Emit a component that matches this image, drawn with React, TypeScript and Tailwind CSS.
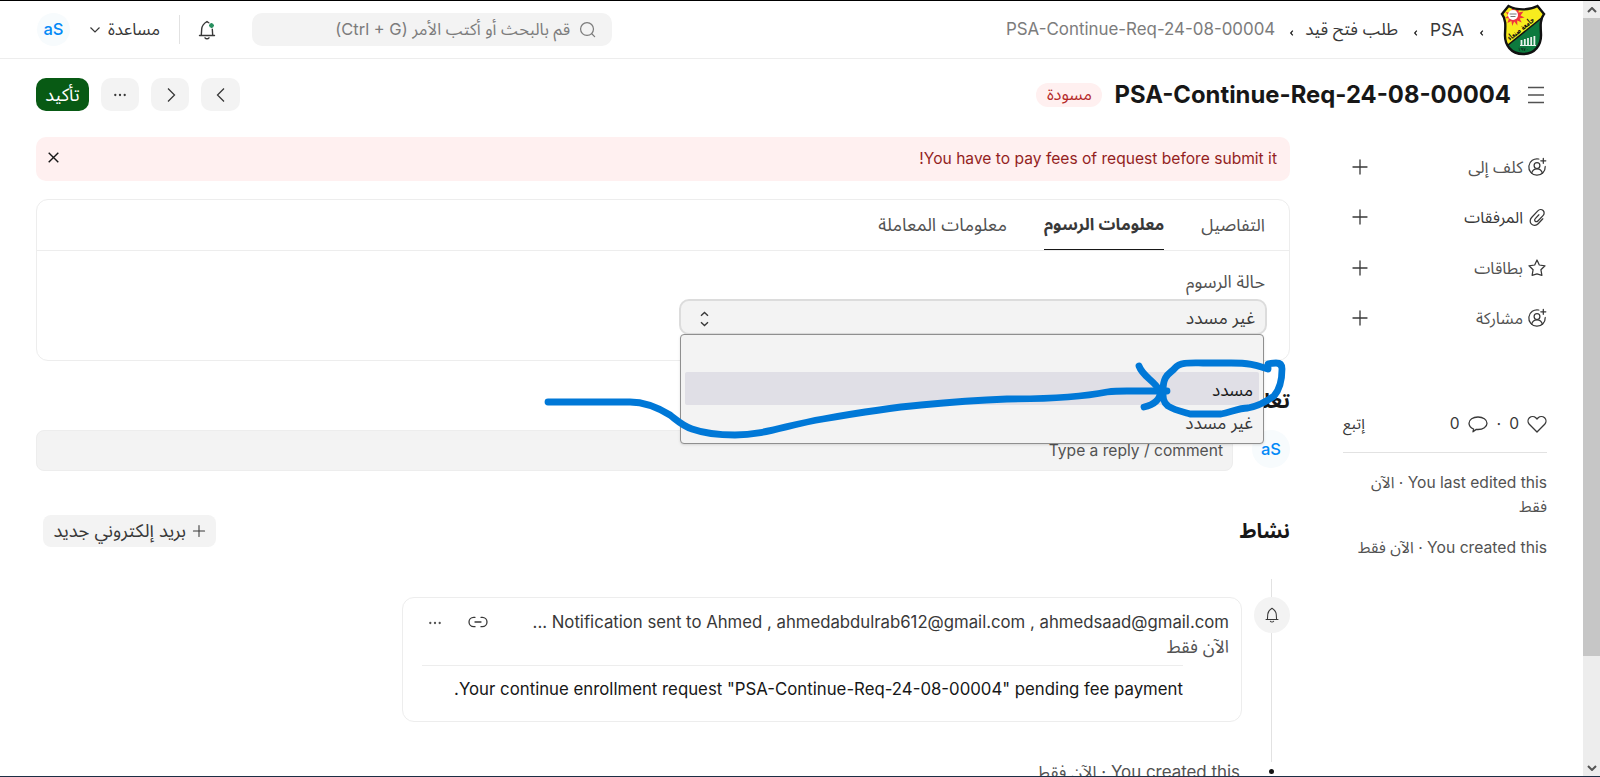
import type { ReactNode } from "react";

function Svg({ s = 20, w = 1.2, className = "", children }: { s?: number; w?: number; className?: string; children: ReactNode }) {
  return (
    <svg width={s} height={s} viewBox="0 0 20 20" fill="none" stroke="currentColor" strokeWidth={w} strokeLinecap="round" strokeLinejoin="round" className={"shrink-0 " + className}>
      {children}
    </svg>
  );
}

const AssignIcon = () => (
  <Svg w={1.25}>
    <path d="M11.800 2A8.200 8.200 0 1 0 18.200 9.500" />
    <circle cx="10" cy="8.600" r="2.900" />
    <path d="M4.600 16.200c.7-2.600 2.800-4.300 5.400-4.300s4.700 1.700 5.400 4.300M16.300 1.300v5M13.800 3.800h5" />
  </Svg>
);
const ClipIcon = () => (
  <Svg w={1.25}>
    <path d="M15.800 11.800l-4.600 4.900c-1.900 2-4.900 2.100-6.700.4s-1.800-4.600.1-6.600l6.200-6.600c1.500-1.600 3.900-1.700 5.300-.4s1.400 3.500-.1 5.100l-5.100 5.400c-.8.9-2 .9-2.700.2s-.7-1.800.1-2.600l3.600-3.800" />
  </Svg>
);
const StarIcon = () => (
  <Svg w={1.25}>
    <path d="M10 2l2.300 5 5.700.8-4.100 3.900 1 5.600-4.900-1.400-4.900 1.400 1-5.600L2 7.800 7.700 7z" />
  </Svg>
);
const PlusIcon = ({ s = 20 }: { s?: number }) => (
  <Svg s={s} w={1.3}><path d="M10 3v14M3 10h14" /></Svg>
);
const Dots = () => (
  <svg width="16" height="16" viewBox="0 0 16 16" fill="currentColor" className="shrink-0">
    <circle cx="3.300" cy="8" r="1.150" /><circle cx="8" cy="8" r="1.150" /><circle cx="12.700" cy="8" r="1.150" />
  </svg>
);
const BellShape = () => (
  <path d="M2.500 15.500h15M4.300 15.300l.4-6.300C4.900 5.500 6.900 3.500 10 1.500c3.100 2 5.100 4 5.300 7.500l.4 6.300M8 17.800c.5.700 1.200 1 2 1s1.500-.3 2-1" />
);

const SHIELD = "M8.500 2C17 6.500 29 6.500 37.500 2L44 10c-4 5-3.500 12-3 20 .5 11-6 20-18 20S4.500 41 5 30C5.500 22 6 15 2 10z";

function Crest() {
  return (
    <svg width="46" height="52" viewBox="0 0 46 52" className="shrink-0">
      <defs>
        <clipPath id="shield"><path d={SHIELD} /></clipPath>
      </defs>
      <g clipPath="url(#shield)">
        <rect width="46" height="52" fill="#0d7a3e" />
        <path d="M0 0H46V11L0 47z" fill="#f7ec1e" />
        <path d="M13 3l2 4 4-3-.5 4.500 5-1-3 4 4 2-4.800 1 2 4-4.500-2 .2 5-3.200-4-2 4.500-.8-5-4 2 1.600-4.500-4-.5 3.500-2.500-3-3.500 4.500.8z" fill="#f0353f" />
        <circle cx="13" cy="11" r="5" fill="#fff" />
        <path d="M9.500 10h7M10.500 12.500h5" stroke="#777" strokeWidth="1" />
        <path d="M3 45L44 12" stroke="#111" strokeWidth="1.500" />
        <path d="M21.500 36v5M24.800 35v6M28 34v7M31.200 33v8M34.400 32v9" stroke="#e9f3ec" strokeWidth="1.800" />
        <path d="M20 41.500h16" stroke="#e9f3ec" strokeWidth="1" />
      </g>
      <path d={SHIELD} fill="none" stroke="#111" strokeWidth="2.400" />
      <text transform="translate(10 37) rotate(-39)" fontSize="8.500" fontWeight="bold" direction="ltr" textLength="32" lengthAdjust="spacingAndGlyphs" className="font-['DejaVu_Sans']" fill="#111">جامعة صنعاء</text>
      <text x="18" y="47" fontSize="5" direction="ltr" fill="#111" className="font-['DejaVu_Sans']">١٩٧٠</text>
    </svg>
  );
}

const Sep = () => (
  <span className="mt-[7px] flex w-[9px] justify-center text-[#171717]">
    <svg width="5" height="8" viewBox="0 0 5 8" fill="none" stroke="currentColor" strokeWidth="1.200"><path d="M3.800 1.700L1.700 4l2.100 2.300" /></svg>
  </span>
);

function SideRow({ icon, label, size }: { icon: ReactNode; label: string; size: string }) {
  return (
    <div className="flex h-[50.300px] items-center text-[#383838]">
      {icon}
      <span className={"mr-[4px] " + size}>{label}</span>
      <span className="mr-auto ml-[7px] flex"><PlusIcon /></span>
    </div>
  );
}

export default function App() {
  return (
    <div dir="rtl" className="relative flex h-[777px] w-[1600px] overflow-hidden border-y border-t-black border-b-[#1d2f45] bg-white font-['Inter','Noto_Sans_Arabic','Noto_Sans',sans-serif] text-[16.250px] text-[#383838]">
      <div className="flex w-[17px] shrink-0 flex-col bg-[#ededed] text-[#555]">
        <div className="flex h-[17px] items-center justify-center"><svg width="10" height="6" viewBox="0 0 10 6" fill="none" stroke="currentColor" strokeWidth="2"><path d="M1 5l4-4 4 4" /></svg></div>
        <div className="h-[638px] bg-[#c6c6c6]" />
        <div className="mt-auto flex h-[17px] items-center justify-center"><svg width="10" height="6" viewBox="0 0 10 6" fill="none" stroke="currentColor" strokeWidth="2"><path d="M1 1l4 4 4-4" /></svg></div>
      </div>

      <div className="flex min-w-0 flex-1 flex-col">
        <nav className="flex h-[58px] shrink-0 items-center border-b border-[#ededed] pr-[37px] pl-[36px]">
          <Crest />
          <div className="mr-[14px] flex items-center text-[17.300px]">
            <Sep />
            <span className="mr-[13px]" dir="ltr">PSA</span>
            <span className="mr-[10px]"><Sep /></span>
            <span className="mr-[13px] text-[17px]">طلب فتح قيد</span>
            <span className="mr-[9px]"><Sep /></span>
            <span className="mr-[12px] text-[16.900px] text-[#7c7c7c]" dir="ltr">PSA-Continue-Req-24-08-00004</span>
          </div>
          <div className="mr-auto flex h-[33px] w-[360px] items-center rounded-[10px] bg-[#f3f3f3] pr-[15px] text-[#7c7c7c]">
            <Svg s={19} w={1.300}><circle cx="9.500" cy="9.500" r="6.800" /><path d="M14.500 14.500L17.500 17.500" /></Svg>
            <span className="mr-[8px] text-[16.500px]">قم بالبحث أو أكتب الأمر (Ctrl + G)</span>
          </div>
          <span className="relative mr-[35px] flex">
            <Svg w={1.400}><BellShape /></Svg>
            <span className="absolute top-[3px] right-[3px] h-[5px] w-[5px] rounded-full bg-[#278f5e] outline-1 outline-white" />
          </span>
          <span className="mr-[17px] h-[29px] w-px bg-[#e2e2e2]" />
          <span className="mr-[19px] text-[16.800px]">مساعدة</span>
          <svg width="12" height="8" viewBox="0 0 12 8" fill="none" stroke="currentColor" strokeWidth="1.200" className="mr-[7px]"><path d="M1.500 1.500L6 6l4.500-4.500" /></svg>
          <span className="mr-[19px] ml-px flex h-[33px] w-[33px] items-center justify-center rounded-full bg-[#f7fbfd] text-[16.500px] font-medium text-[#0289f7]" dir="ltr">aS</span>
        </nav>

        <header className="flex h-[68px] shrink-0 items-center pt-[3px] pr-[37px] pl-[36px]">
          <svg width="20" height="20" viewBox="0 0 20 20" stroke="#525252" strokeWidth="1.300"><path d="M2 2.500h16M2 10h16M2 17.500h16" /></svg>
          <h1 className="mr-[15px] text-[23.850px] font-bold text-[#171717]" dir="ltr">PSA-Continue-Req-24-08-00004</h1>
          <span className="mr-[12px] flex h-[24px] w-[66px] items-center justify-center rounded-full bg-[#fff0f0] pb-px text-[16.500px] text-[#b52a2a]">مسودة</span>
          <div className="mr-auto flex gap-[12px]">
            <span className="flex h-[33px] w-[39px] items-center justify-center rounded-[10px] bg-[#f3f3f3]"><svg width="16" height="16" viewBox="0 0 16 16" fill="none" stroke="currentColor" strokeWidth="1.300"><path d="M11 1.500L4.500 8l6.500 6.500" /></svg></span>
            <span className="flex h-[33px] w-[38px] items-center justify-center rounded-[10px] bg-[#f3f3f3]"><svg width="16" height="16" viewBox="0 0 16 16" fill="none" stroke="currentColor" strokeWidth="1.300"><path d="M6 1.500L12.500 8 6 14.500" /></svg></span>
            <span className="flex h-[33px] w-[38px] items-center justify-center rounded-[10px] bg-[#f3f3f3]"><Dots /></span>
            <span className="flex h-[33px] w-[53px] items-center justify-center rounded-[10px] bg-[#085a14] pb-px text-[18px] text-white">تأكيد</span>
          </div>
        </header>

        <div className="flex min-h-0 flex-1 pr-[36px]">
          <aside className="w-[204px] shrink-0 pt-[15px]">
            <SideRow icon={<AssignIcon />} label="كلف إلى" size="text-[16.500px] text-[#525252]" />
            <SideRow icon={<ClipIcon />} label="المرفقات" size="text-[16px]" />
            <SideRow icon={<StarIcon />} label="بطاقات" size="text-[16.300px] text-[#525252]" />
            <SideRow icon={<AssignIcon />} label="مشاركة" size="text-[16.300px] text-[#525252]" />
            <div className="mt-[54px] flex h-[56px] items-center border-b border-[#e2e2e2] pb-[2px]">
              <Svg s={20} w={1.300}><path d="M10 18L2.300 10.200C.6 8.300.6 5.500 2.400 3.800s4.700-1.700 6.400 0L10 5l1.200-1.200c1.700-1.700 4.600-1.700 6.400 0s1.800 4.500.1 6.400z" /></Svg>
              <span className="mr-[8px] text-[15.600px]">0</span>
              <span className="mr-[8px]">·</span>
              <Svg s={20} w={1.300} className="mr-[8px]"><path d="M5 17.800l.6-2.800C3 13.900 1 11.800 1 9.200 1 5.500 5 3 10 3s9 2.500 9 6.200-4 6.300-9 6.300c-.6 0-1.200 0-1.700-.1z" /></Svg>
              <span className="mr-[9px] text-[15.600px]">0</span>
              <span className="mr-auto text-[15.500px]">إتبع</span>
            </div>
            <div className="mt-[18px] w-[190px] leading-[24px] text-[#525252] text-[15.600px]">You last edited this · الآن فقط</div>
            <div className="mt-[17px] leading-[24px] text-[#525252] text-[15.700px]">You created this · الآن فقط</div>
          </aside>

          <main className="mr-[53px] flex w-[1254px] shrink-0 flex-col pt-[10px]">
            <div className="flex h-[44px] shrink-0 items-center rounded-[10px] bg-[#fff0f0] pr-[13px] pl-[12px] text-[15.600px] text-[#941f1f]">
              <span className="pb-px">You have to pay fees of request before submit it!</span>
              <svg width="11" height="11" viewBox="0 0 11 11" stroke="#171717" strokeWidth="1.400" className="mr-auto mb-[3px]"><path d="M.7.700l9.600 9.600M10.300.7L.7 10.300" /></svg>
            </div>

            <section className="mt-[18px] h-[162px] shrink-0 rounded-[12px] border border-[#ededed]">
              <div className="flex h-[51px] gap-[37px] border-b border-[#ededed] pr-[24px] text-[17.400px] text-[#525252]">
                <span className="flex items-center">التفاصيل</span>
                <span className="flex items-center border-b border-[#171717] pt-px text-[16.800px] font-bold text-[#383838]">معلومات الرسوم</span>
                <span className="flex items-center text-[18.100px]">معلومات المعاملة</span>
              </div>
              <div className="pr-[22px]">
                <div className="mt-[19px] pr-[2px] text-[17.500px] leading-[24px] text-[#525252]">حالة الرسوم</div>
                <div className="relative mt-[5px] flex h-[36px] w-[588px] items-center rounded-[10px] border-2 border-[#dcdcdc] bg-[#f3f3f3] pt-[3px] pr-[10px] pl-[19px] text-[17.600px]">
                  غير مسدد
                  <svg width="9" height="16" viewBox="0 0 9 16" fill="none" stroke="#383838" strokeWidth="1.400" className="mr-auto"><path d="M1 4.800l3.500-3.300L8 4.800M1 11.200l3.500 3.300L8 11.200" /></svg>
                  <div className="absolute top-[33px] left-[-1px] z-10 h-[110px] w-[584px] rounded-[4px] border border-[#8f8f8f] bg-[#f3f3f3] px-[4px] pt-[37px] shadow-sm">
                    <div className="flex h-[33px] items-center rounded-[2px] bg-[#e0dfe6] pt-[3px] pr-[6px] text-[17.200px] text-[#171717]">مسدد</div>
                    <div className="flex h-[33px] items-center pt-[3px] pr-[6px] text-[17.200px]">غير مسدد</div>
                  </div>
                </div>
              </div>
            </section>

            <h2 className="mt-[24px] h-[32px] text-[21px] leading-[32px] font-bold text-[#171717]">تعليقات</h2>
            <div className="mt-[13px] flex shrink-0">
              <span className="flex h-[38px] w-[38px] items-center justify-center rounded-full bg-[#f7fbfd] text-[16.500px] font-medium text-[#0289f7]" dir="ltr">aS</span>
              <div className="mr-[19px] flex h-[41px] w-[1197px] items-center rounded-[8px] border border-[#ededed] bg-[#f3f3f3] pr-[9px] text-[15.600px] text-[#525252]">Type a reply / comment</div>
            </div>

            <div className="mt-[44px] flex h-[32px] shrink-0 items-center">
              <h2 className="text-[20.200px] font-bold text-[#171717]">نشاط</h2>
              <span className="mr-auto ml-[7px] flex h-[32px] w-[173px] items-center rounded-[8px] bg-[#f3f3f3] pr-[9px] pb-px text-[18.400px]"><PlusIcon s={16} /><span className="mr-[5px]">بريد إلكتروني جديد</span></span>
            </div>

            <div className="mt-[32px] flex">
              <div className="flex w-[37px] flex-col items-center">
                <span className="h-[18px] w-px bg-[#e2e2e2]" />
                <span className="flex h-[36px] w-[36px] shrink-0 items-center justify-center rounded-full bg-[#f3f3f3]"><Svg s={16} w={1.300}><BellShape /></Svg></span>
                <span className="h-[129px] w-px bg-[#e2e2e2]" />
                <span className="mt-[7px] h-[5px] w-[5px] rounded-full bg-[#171717]" />
              </div>
              <div className="mr-[11px] pt-[18px]">
                <div className="h-[125px] w-[840px] rounded-[12px] border border-[#ededed] pr-[12px] pl-[19px]">
                  <div className="flex items-center pt-[12px] leading-[24px]">
                    <span className="text-[16.740px]">Notification sent to Ahmed , ahmedabdulrab612@gmail.com , ahmedsaad@gmail.com ...</span>
                    <Svg s={20} w={1.300} className="mr-auto"><path d="M7 5.300H5.700a4.700 4.700 0 0 0 0 9.400H7M13 5.300h1.300a4.700 4.700 0 0 1 0 9.400H13M7 10h6" /></Svg>
                    <span className="mr-[25px] ml-[5px] pt-[2px] text-[#525252]"><Dots /></span>
                  </div>
                  <div className="text-[17.500px] leading-[26px] text-[#525252]">الآن فقط</div>
                  <div className="mt-[5px] mr-[46px] border-t border-[#ededed] pt-[11px] text-[16.800px] leading-[24px] text-[#171717]">Your continue enrollment request "PSA-Continue-Req-24-08-00004" pending fee payment.</div>
                </div>
                <div className="mt-[37px] pr-[2px] text-[16.900px] leading-[26px] text-[#525252]">You created this · الآن فقط</div>
              </div>
            </div>
          </main>
        </div>
      </div>

      <svg width="1600" height="777" viewBox="0 1 1600 777" className="pointer-events-none absolute top-0 left-0 z-20" fill="none" stroke="#0078d7" strokeWidth="6.800" strokeLinecap="round" strokeLinejoin="round">
        <path d="M548 402h82c14 0 27 5 40 13 9 7 13 11 22 14 14 5 28 6 43 6 29 0 52-10 88-16 34-6 64-11 98-14 30-3 58-5 86-6 47 0 80-3 100-7 8-1 13-1 20-1h40" />
        <path d="M1139 366c4 11 15 14 21 25 1 8-6 14-16 16" />
        <path d="M1268 369c-10-3-16-6-37-6h-28c-12 0-23-1-28 5s-12 6-12 23c0 7 0 11 5 15 6 4 15 6 22 8h31c10-2 18-6 27-6 11-2 18-6 26-12 6-7 8-18 8-27 0-4-2-6-6-6-3 0-5 0-8 1v5" />
      </svg>
    </div>
  );
}
